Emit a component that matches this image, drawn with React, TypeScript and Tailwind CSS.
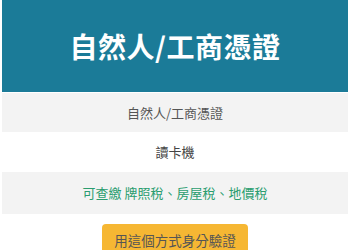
export default function App() {
  const font = { fontFamily: '"Noto Sans CJK TC", "Noto Sans", sans-serif' };
  return (
    <div className="w-[350px] h-[250px] bg-white overflow-hidden" style={font}>
      <div className="mx-[2px] flex flex-col">
        <div className="h-[92px] bg-[#1b7b98] flex items-center justify-center">
          <span className="text-[28px] font-bold text-white tracking-[0.5px]">自然人/工商憑證</span>
        </div>
        <div className="mt-[1px] h-[39px] bg-[#f3f3f3] flex items-center justify-center text-[13px] text-[#555]">
          自然人/工商憑證
        </div>
        <div className="h-[40px] bg-white flex items-center justify-center text-[13px] text-[#444]">
          讀卡機
        </div>
        <div className="h-[42px] bg-[#f3f3f3] flex items-center justify-center text-[13px] text-[#2a9d6f]">
          可查繳 牌照稅、房屋稅、地價稅
        </div>
        <div className="flex justify-center pt-[10px]">
          <button className="w-[146px] h-[32px] rounded-[4px] bg-[#f6b733] text-[13.5px] text-[#555] flex items-center justify-center">
            用這個方式身分驗證
          </button>
        </div>
      </div>
    </div>
  );
}
